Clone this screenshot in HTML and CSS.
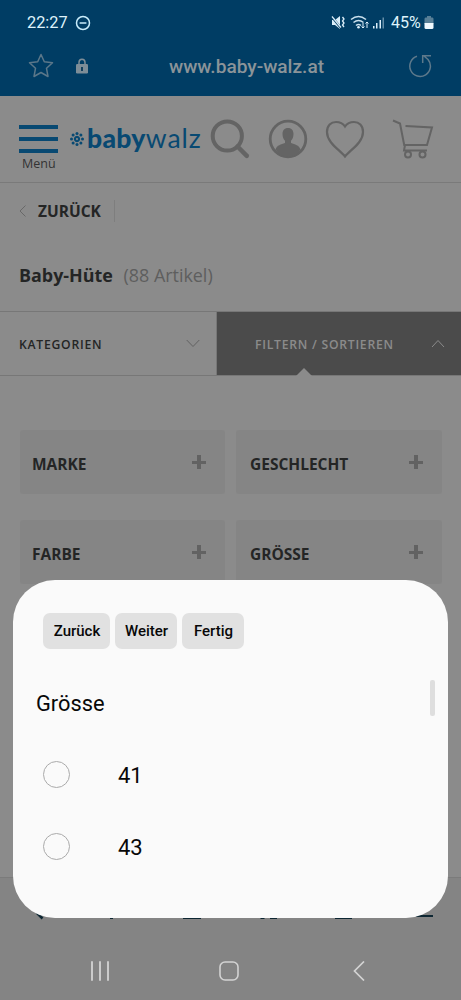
FILE: index.html
```html
<!DOCTYPE html>
<html lang="de">
<head>
<meta charset="utf-8">
<meta name="viewport" content="width=device-width">
<title>Baby-Hüte | baby-walz</title>
<link rel="stylesheet" href="styles.css">
</head>
<body>
<div class="screen">
  <header class="browser">
    <div class="status">
      <span class="clock">22:27</span>
      <svg class="dnd" width="16" height="16" viewBox="0 0 16 16" fill="none" stroke="#c9edfb" stroke-width="1.5"><circle cx="8" cy="8" r="6.5"/><path d="M4.6 8h6.8"/></svg>
      <svg class="signals" width="56" height="18" viewBox="0 0 56 18">
        <g fill="#dceffa"><path d="M1 6h3l5-4v13l-5-4H1z"/></g>
        <path d="M1 3l9 11" stroke="#003d64" stroke-width="2.2"/><path d="M1 2.5l9 11" stroke="#dceffa" stroke-width="1.2"/>
        <path d="M11.5 3l1.5 2-1.5 2 1.5 2-1.5 2 1.5 2" fill="none" stroke="#dceffa" stroke-width="1.3"/>
        <g fill="none" stroke="#c9e0ed" stroke-width="1.6"><path d="M20 5.5q7.500-6 15 0M22.500 8.500q5-4 10 0M25 11.500q2.500-2 5 0"/></g>
        <circle cx="27.5" cy="13.200" r="1.300" fill="#dceffa"/>
        <path d="M32 9v5m-1.500-1.500L32 14l1.500-1.500M36 14V8m-1.500 1.500L36 8l1.500 1.500" fill="none" stroke="#dceffa"/>
        <g fill="#dceffa"><path d="M42 12h1.500v2.500H42zM45 9h1.500v5.500H45zM48.500 6H50v8.500h-1.500z"/><path d="M51.500 3.500H53v11h-1.500z" opacity=".45"/></g>
      </svg>
      <span class="percent">45%</span>
      <svg class="battery" width="10" height="15" viewBox="0 0 10 15"><path d="M3 1h4v1.500h1.500Q9.500 2.500 9.500 4v5h-9V4q0-1.500 1-1.500H3z" fill="#587f96"/><path d="M.5 8h9v4.500Q9.500 14 8 14H2Q.5 14 .5 12.500z" fill="#eff8fd"/></svg>
    </div>
    <div class="address">
      <svg class="star" width="26" height="26" viewBox="0 0 26 26" fill="none" stroke="#5b7789" stroke-width="1.5" stroke-linejoin="round"><path d="M13 1.500l3.300 7.300 8.200 1-6 5.500 1.500 8.200-7-4-7 4 1.500-8.200-6-5.500 8.200-1z"/></svg>
      <svg class="lock" width="12" height="16" viewBox="0 0 12 16"><path d="M3 7V4.500a3 3.300 0 0 1 6 0V7" fill="none" stroke="#7d8d97" stroke-width="1.500"/><rect y="6" width="12" height="9.500" rx="1.300" fill="#7d8d97"/><path d="M5 9h2v4H5z" fill="#123f5c"/></svg>
      <span class="url">www.baby-walz.at</span>
      <svg class="reload" width="24" height="24" viewBox="0 0 24 24" fill="none" stroke="#5d798b" stroke-width="1.500"><path d="M9 2.300A10.300 10.300 0 1 0 20 5.500L16 2M14.700 9V1.700H23"/></svg>
    </div>
  </header>

  <div class="shopbar">
    <div class="menu"><i></i><i></i><i></i><span>Menü</span></div>
    <div class="logo">
      <svg width="14" height="14" viewBox="-7 -7 14 14" fill="#084972"><path fill-rule="evenodd" d="M0-3.200a3.200 3.200 0 1 0 .01 0zM0-1a1 1 0 1 1-.01 0z"/><circle cy="-5.500" r="1.500"/><circle cy="5.500" r="1.500"/><circle cx="-5.500" r="1.500"/><circle cx="5.500" r="1.500"/><circle cx="3.900" cy="3.900" r="1.500"/><circle cx="-3.900" cy="3.900" r="1.500"/><circle cx="3.900" cy="-3.900" r="1.500"/><circle cx="-3.900" cy="-3.900" r="1.500"/></svg>
      <span class="baby">baby</span><span class="walz">walz</span>
    </div>
    <svg class="search" width="40" height="40" viewBox="0 0 40 40" fill="none" stroke="#646464" stroke-width="4"><circle cx="17.300" cy="17" r="14.600"/><path d="M27.500 27.500l9.300 9.300" stroke-width="4.500" stroke-linecap="round"/></svg>
    <svg class="user" width="40" height="40" viewBox="0 0 40 40"><circle cx="20" cy="20" r="17.800" fill="none" stroke="#646464" stroke-width="2.800"/><path d="M20 9c3.800 0 5.500 2.600 5.500 6 0 3-1 5.300-2.500 6.700V24c4 1.500 8 2 9.500 6.500Q27.500 38 20 38T7.500 30.500C9 26 13 25.500 17 24v-2.300C15.500 20.300 14.500 18 14.500 15c0-3.400 1.700-6 5.500-6z" fill="#646464"/></svg>
    <svg class="heart" width="40" height="40" viewBox="0 0 40 40" fill="none" stroke="#646464" stroke-width="2.200"><path d="M20 37.500C15 31 2 24 2 13 2 6.500 6 3 11 3c4 0 7 1.500 9 4.500C22 4.500 25 3 29 3c5 0 9 3.500 9 10 0 11-13 18-18 24.500z"/></svg>
    <svg class="cart" width="42" height="40" viewBox="0 0 42 40" fill="none" stroke="#646464" stroke-width="2"><path d="M1 1.500l7 3 4.200 21.500h22.800l5-17.500L13.500 7M13 26l-1 5.500h23"/><circle cx="16" cy="35.500" r="3"/><circle cx="30.500" cy="35.500" r="3"/></svg>
  </div>

  <div class="back">
    <svg width="7" height="12" viewBox="0 0 7 12" fill="none" stroke="#686868"><path d="M6.500.5L1 6l5.500 5.500"/></svg>
    <b>ZURÜCK</b><i></i>
  </div>
  <h1 class="title">Baby-Hüte <span>(88 Artikel)</span></h1>

  <div class="tabs">
    <div class="tab"><span class="categories">KATEGORIEN</span><svg width="14" height="9" viewBox="0 0 14 9" fill="none" stroke="#626262"><path d="M.7 1L7 7.500 13.300 1"/></svg></div>
    <div class="tab active"><span class="sort">FILTERN / SORTIEREN</span><svg width="14" height="9" viewBox="0 0 14 9" fill="none" stroke="#8b8b8b"><path d="M1 8l6-6.500L13 8"/></svg><i class="pointer"></i></div>
  </div>

  <div class="filters">
    <div class="filter"><span>MARKE</span><i class="plus"></i></div>
    <div class="filter"><span>GESCHLECHT</span><i class="plus"></i></div>
    <div class="filter"><span>FARBE</span><i class="plus"></i></div>
    <div class="filter"><span>GRÖSSE</span><i class="plus"></i></div>
  </div>

  <footer class="bottom">
    <svg class="toolbar" width="461" height="45" viewBox="0 0 461 45" fill="none" stroke="#0d2632" stroke-width="2"><path d="M37 35l5.500 5.500" stroke-width="2.500"/><path d="M110 40h3M183 40h18M260.500 40h4M270 40h7M335 40h17M416 38h17"/></svg>
    <nav class="system">
      <svg width="20" height="20" viewBox="0 0 20 20" stroke="#d3d3d3" stroke-width="1.800" stroke-linecap="round"><path d="M2 1v18M10 1v18M18 1v18"/></svg>
      <svg class="home" width="20" height="20" viewBox="0 0 20 20" fill="none" stroke="#d3d3d3" stroke-width="1.600"><rect x="1" y="1" width="18" height="18" rx="5"/></svg>
      <svg width="12" height="20" viewBox="0 0 12 20" fill="none" stroke="#d3d3d3" stroke-width="1.700"><path d="M11 .5L1.500 10 11 19.500"/></svg>
    </nav>
  </footer>

  <section class="dialog">
    <div class="buttons"><button class="prev">Zurück</button><button class="next">Weiter</button><button class="done">Fertig</button></div>
    <h2>Grösse</h2>
    <label class="option"><i></i><span>41</span></label>
    <label class="option"><i></i><span>43</span></label>
    <div class="scroll"></div>
  </section>
</div>
</body>
</html>
```
FILE: styles.css
```css
* { box-sizing: border-box; }
body { margin: 0; font-family: "Open Sans", "Noto Sans", sans-serif; color: #242525; }
svg { display: block; flex: none; }
span, b { white-space: nowrap; }
.screen { position: relative; width: 461px; height: 1000px; background: #8b8b8b; overflow: hidden; display: flex; flex-direction: column; }
.browser { height: 96px; background: #003d64; font-family: Roboto, sans-serif; }
.status { height: 45px; display: flex; align-items: center; padding: 0 27px; color: #dff3fb; font-size: 16.3px; }
.clock { width: 48px; }
.signals { margin-left: 240px; }
.percent { margin-left: 4px; width: 33px; font-size: 16px; }
.address { height: 42px; display: flex; align-items: center; padding-left: 28px; }
.lock { margin-left: 22px; }
.url { margin-left: 81px; width: 239px; color: #8b9499; font-size: 19.100px; font-weight: 500; }
.shopbar { height: 87px; border-bottom: 1px solid #7a7a7a; display: flex; align-items: flex-start; padding: 23px 0 0 19px; }
.menu { width: 39px; display: flex; flex-direction: column; gap: 8px; padding-top: 6px; }
.menu i { height: 4px; background: #084972; }
.menu span { margin: -6px 0 0 3px; font-size: 12.5px; line-height: 18px; color: #333; }
.logo { height: 40px; display: flex; align-items: center; margin-left: 12px; width: 140px; color: #084972; }
.baby, .walz { font-family: Lato, sans-serif; font-size: 26.500px; line-height: 30px; margin-top: -2px; }
.baby { font-weight: 900; margin-left: 3px; letter-spacing: .3px; }
.walz { letter-spacing: 1px; }
.user { margin-left: 17.5px; }
.heart { margin-left: 17.5px; }
.cart { margin-left: 27px; }
.back { height: 56px; display: flex; align-items: center; padding-left: 19px; }
.back b { margin-left: 12px; width: 76px; font-size: 15.500px; }
.back i { width: 1px; height: 22px; background: #7e7e7e; }
.title { margin: 0; height: 72px; line-height: 72px; padding-left: 19px; font-size: 17.900px; }
.title span { margin-left: 6px; font-weight: 400; color: #5e5e5e; }
.tabs { height: 65px; display: flex; font-size: 12.200px; border-top: 1px solid #777; border-bottom: 1px solid #777; }
.tab { position: relative; width: 217px; display: flex; align-items: center; justify-content: space-between; padding: 0 16px 0 19px; border-right: 1px solid #777; }
.active { flex: 1; background: #4b4b4b; color: #8b8b8b; padding: 0 16px 0 38px; border: 0; }
.categories, .sort { font-weight: 600; letter-spacing: .75px; padding-top: 1px; }
.pointer { position: absolute; left: 79px; bottom: -1px; border: 8px solid transparent; border-top: 0; border-bottom-color: #8b8b8b; }
.filters { padding: 54px 18px 0 20px; display: grid; grid-template-columns: 205px 206px; grid-auto-rows: 64px; gap: 26px 11px; }
.filter { background: #858585; display: flex; align-items: center; justify-content: space-between; padding: 4px 19px 0 12px; border-radius: 3px; font-size: 15.500px; font-weight: 700; }
.filter:nth-child(even) { padding-left: 14px; }
.plus { width: 14px; height: 14px; margin-top: -4px; background: linear-gradient(#626262,#626262) 50%/14px 3px no-repeat, linear-gradient(#626262,#626262) 50%/4px 14px no-repeat; }
.bottom { margin-top: auto; height: 123px; background: #848484; border-top: 1px solid #7b7b7b; }
.system { display: flex; padding: 38px 0 0 90px; }
.home { margin: 0 114px 0 109px; }
.dialog { position: absolute; left: 13px; top: 580px; width: 435px; height: 338px; border-radius: 42px; background: #fafafa; color: #080808; font-family: Roboto, sans-serif; padding: 33px 23px; }
.buttons { display: flex; gap: 5px; padding-left: 7px; }
button { height: 36px; padding: 0 0 0 1px; border: 0; border-radius: 7px; background: #e1e1e1; font: 500 15px Roboto, sans-serif; color: #080808; }
.prev { width: 67px; }
.next, .done { width: 62px; }
h2 { margin: 36px 0 38px; font-size: 21.800px; line-height: 38px; font-weight: 400; }
.option { display: flex; align-items: center; height: 27px; margin: 0 0 45px 7px; font-size: 22px; }
.option span { padding-top: 2px; }
.option i { width: 27px; height: 27px; border: 1px solid #aaa; border-radius: 50%; margin-right: 48px; }
.scroll { position: absolute; right: 13px; top: 100px; width: 5px; height: 36px; border-radius: 2px; background: #dedede; }
```
